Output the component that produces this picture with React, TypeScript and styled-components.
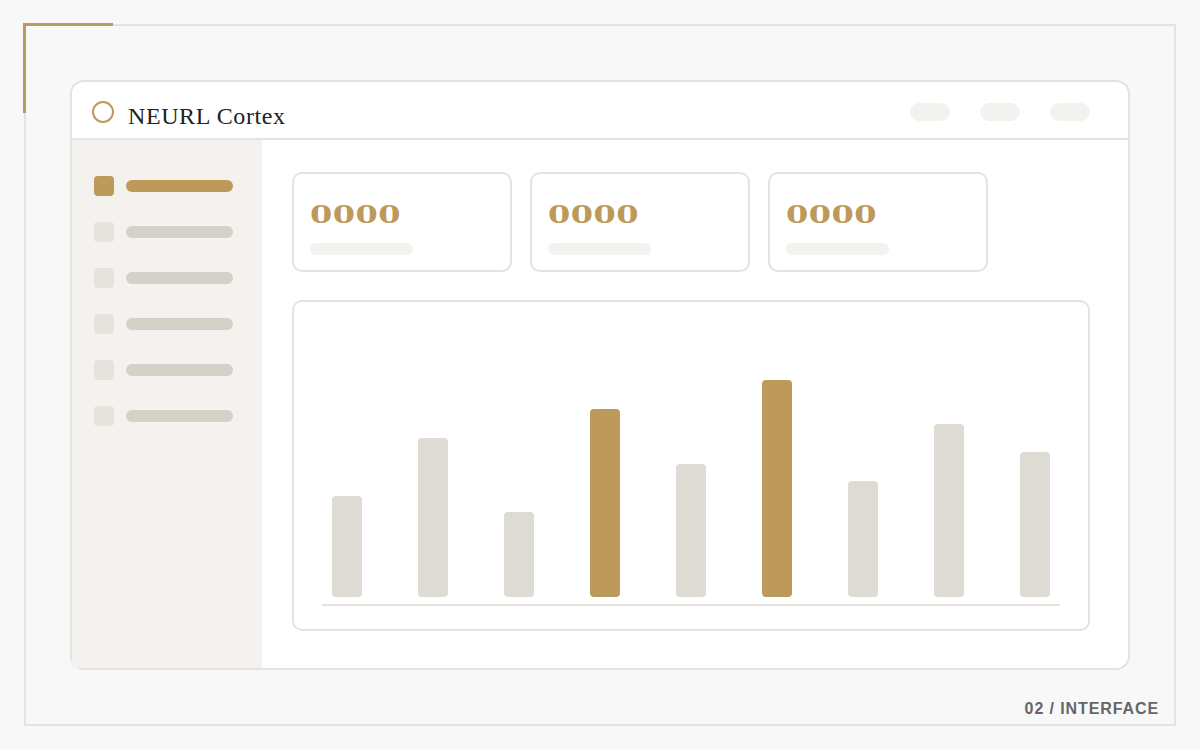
import React from "react";
import styled, { createGlobalStyle } from "styled-components";

const GOLD = "#bd995a";
const LINE = "#e6e2dd";

const GlobalStyle = createGlobalStyle`
  html, body { margin: 0; padding: 0; background: #f8f8f8; }
  body { font-family: "Liberation Sans", Arial, sans-serif; }
  * { box-sizing: border-box; }
`;

const Page = styled.div`
  width: 1200px;
  height: 750px;
  padding: 24px;
  background: #f8f8f8;
`;

const Frame = styled.div`
  position: relative;
  height: 100%;
  border: 2px solid ${LINE};
  display: flex;
  flex-direction: column;
  align-items: center;
  padding-top: 54px;
`;

const Corner = styled.div`
  position: absolute;
  top: -3px;
  left: -3px;
  width: 90px;
  height: 90px;
  border-top: 3px solid ${GOLD};
  border-left: 3px solid ${GOLD};
`;

const Window = styled.div`
  width: 1060px;
  height: 590px;
  flex-shrink: 0;
  border: 2px solid ${LINE};
  border-radius: 14px;
  background: #fff;
  display: flex;
  flex-direction: column;
`;

const Header = styled.header`
  height: 58px;
  flex-shrink: 0;
  border-bottom: 2px solid ${LINE};
  display: flex;
  align-items: center;
  padding: 4px 38px 0 20px;
`;

const LogoRing = styled.div`
  width: 22px;
  height: 22px;
  border-radius: 50%;
  border: 2px solid ${GOLD};
  flex-shrink: 0;
`;

const Title = styled.h1`
  margin: 0 0 0 14px;
  font-family: "Liberation Serif", "Times New Roman", serif;
  font-weight: 400;
  font-size: 24px;
  letter-spacing: 0.6px;
  color: #222;
  line-height: 28px;
  padding-top: 7px;
`;

const Spacer = styled.div`
  flex: 1;
`;

const PillGroup = styled.div`
  display: flex;
  gap: 30px;
`;

const Pill = styled.div`
  width: 40px;
  height: 18px;
  border-radius: 9px;
  background: #f3f2ee;
`;

const Body = styled.div`
  flex: 1;
  display: flex;
  min-height: 0;
`;

const Sidebar = styled.nav`
  width: 190px;
  flex-shrink: 0;
  background: #f4f2ef;
  padding: 36px 0 0 22px;
  display: flex;
  flex-direction: column;
  gap: 26px;
`;

const NavItem = styled.div`
  display: flex;
  align-items: center;
  gap: 12px;
`;

const NavIcon = styled.div<{ $active?: boolean }>`
  width: 20px;
  height: 20px;
  border-radius: 4px;
  background: ${(p) => (p.$active ? GOLD : "#e6e2dc")};
`;

const NavLabel = styled.div<{ $active?: boolean }>`
  width: 107px;
  height: 12px;
  border-radius: 6px;
  background: ${(p) => (p.$active ? GOLD : "#d5d0c8")};
`;

const Main = styled.main`
  flex: 1;
  padding: 32px 38px 0 30px;
  display: flex;
  flex-direction: column;
  gap: 28px;
`;

const StatRow = styled.div`
  display: flex;
  gap: 18px;
`;

const StatCard = styled.div`
  width: 220px;
  height: 100px;
  border: 2px solid ${LINE};
  border-radius: 10px;
  padding: 24px 16px 0;
`;

const StatValue = styled.div`
  font-family: "DejaVu Serif", "Liberation Serif", serif;
  font-weight: 700;
  font-size: 32px;
  line-height: 32px;
  height: 32px;
  letter-spacing: 0.5px;
  color: ${GOLD};
  transform: translateY(1px) scaleY(0.74);
  transform-origin: 50% 50%;
`;

const StatBar = styled.div`
  margin-top: 13px;
  width: 103px;
  height: 12px;
  border-radius: 6px;
  background: #f3f2ee;
`;

const ChartCard = styled.div`
  height: 331px;
  border: 2px solid ${LINE};
  border-radius: 10px;
  padding: 28px 28px 0;
  display: flex;
  flex-direction: column;
`;

const Bars = styled.div`
  height: 267px;
  padding: 0 10px;
  display: flex;
  align-items: flex-end;
  justify-content: space-between;
`;

const Bar = styled.div<{ $accent?: boolean }>`
  width: 30px;
  border-radius: 4px;
  background: ${(p) => (p.$accent ? GOLD : "#dedad4")};
`;

const Baseline = styled.div`
  margin-top: 7px;
  height: 2px;
  background: ${LINE};
`;

const Footer = styled.div`
  align-self: stretch;
  display: flex;
  justify-content: flex-end;
  margin-top: 30px;
  padding-right: 15px;
  font-family: "Liberation Sans", Arial, sans-serif;
  font-weight: 700;
  font-size: 16px;
  line-height: 18px;
  letter-spacing: 0.9px;
  color: #666;
`;

const bars = [
  { h: 101 },
  { h: 159 },
  { h: 85 },
  { h: 188, accent: true },
  { h: 133 },
  { h: 217, accent: true },
  { h: 116 },
  { h: 173 },
  { h: 145 },
];

export default function App() {
  return (
    <>
      <GlobalStyle />
      <Page>
        <Frame>
          <Corner />
          <Window>
            <Header>
              <LogoRing />
              <Title>NEURL Cortex</Title>
              <Spacer />
              <PillGroup>
                <Pill />
                <Pill />
                <Pill />
              </PillGroup>
            </Header>
            <Body>
              <Sidebar>
                {[0, 1, 2, 3, 4, 5].map((i) => (
                  <NavItem key={i}>
                    <NavIcon $active={i === 0} />
                    <NavLabel $active={i === 0} />
                  </NavItem>
                ))}
              </Sidebar>
              <Main>
                <StatRow>
                  {[0, 1, 2].map((i) => (
                    <StatCard key={i}>
                      <StatValue>0000</StatValue>
                      <StatBar />
                    </StatCard>
                  ))}
                </StatRow>
                <ChartCard>
                  <Bars>
                    {bars.map((b, i) => (
                      <Bar key={i} $accent={b.accent} style={{ height: b.h }} />
                    ))}
                  </Bars>
                  <Baseline />
                </ChartCard>
              </Main>
            </Body>
          </Window>
          <Footer>02 / INTERFACE</Footer>
        </Frame>
      </Page>
    </>
  );
}
